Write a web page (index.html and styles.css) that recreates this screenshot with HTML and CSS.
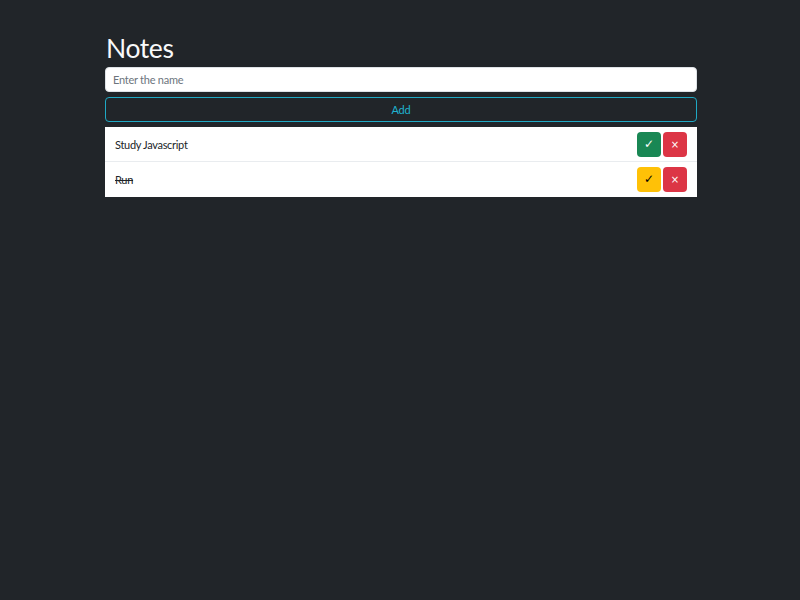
FILE: index.html
```html
<!DOCTYPE html>
<html lang="en">
<head>
<meta charset="utf-8">
<title>Notes</title>
<link rel="stylesheet" href="styles.css">
</head>
<body>
<div class="container">
  <h1 class="title">Notes</h1>
  <input class="field" type="text" placeholder="Enter the name">
  <button class="add-btn" type="button">Add</button>
  <ul class="list">
    <li class="item">
      <span class="item-text">Study Javascript</span>
      <span class="actions">
        <button class="btn btn-done" type="button">&#10003;</button>
        <button class="btn btn-del" type="button">&times;</button>
      </span>
    </li>
    <li class="item">
      <span class="item-text done">Run</span>
      <span class="actions">
        <button class="btn btn-undo" type="button">&#10003;</button>
        <button class="btn btn-del" type="button">&times;</button>
      </span>
    </li>
  </ul>
</div>
</body>
</html>
```
FILE: styles.css
```css
* { box-sizing: border-box; }
html, body {
  margin: 0;
  padding: 0;
  background: #212529;
  font-family: Lato, "Noto Sans", sans-serif;
}
.container {
  width: 592px;
  margin: 0 0 0 105px;
  padding-top: 33px;
  display: flex;
  flex-direction: column;
}
.title {
  margin: 0 0 4px 1px;
  font-size: 26.5px;
  font-weight: 400;
  line-height: 30px;
  letter-spacing: -0.4px;
  color: #f8f9fa;
}
.field {
  height: 25px;
  border: 1px solid #dee2e6;
  border-radius: 4px;
  background: #fff;
  padding: 0 7px;
  font-family: inherit;
  font-size: 11px;
  letter-spacing: -0.25px;
  color: #212529;
  outline: none;
}
.field::placeholder { color: #6c757d; }
.add-btn {
  margin-top: 5px;
  height: 25px;
  border: 1px solid #1fa9c4;
  border-radius: 4px;
  background: transparent;
  color: #1fb3d1;
  font-family: inherit;
  font-size: 11px;
  letter-spacing: -0.2px;
  padding: 0;
}
.list {
  list-style: none;
  margin: 5px 0 0 0;
  padding: 0;
  background: #fff;
}
.item {
  height: 35px;
  display: flex;
  align-items: center;
  justify-content: space-between;
  padding: 0 10px;
  border-bottom: 1px solid #e9ecef;
}
.item:last-child { border-bottom: none; }
.item-text {
  font-size: 11px;
  letter-spacing: -0.3px;
  color: #212529;
}
.item-text.done { text-decoration: line-through; }
.actions {
  display: flex;
  gap: 2px;
}
.btn {
  width: 24px;
  height: 25px;
  border: none;
  border-radius: 4px;
  padding: 0;
  font-family: "DejaVu Sans", sans-serif;
  font-size: 12px;
  line-height: 25px;
  text-align: center;
}
.btn-done { background: #198754; color: #fff; }
.btn-undo { background: #ffc107; color: #000; }
.btn-del { background: #dc3545; color: #fff; font-size: 10px; }
```
